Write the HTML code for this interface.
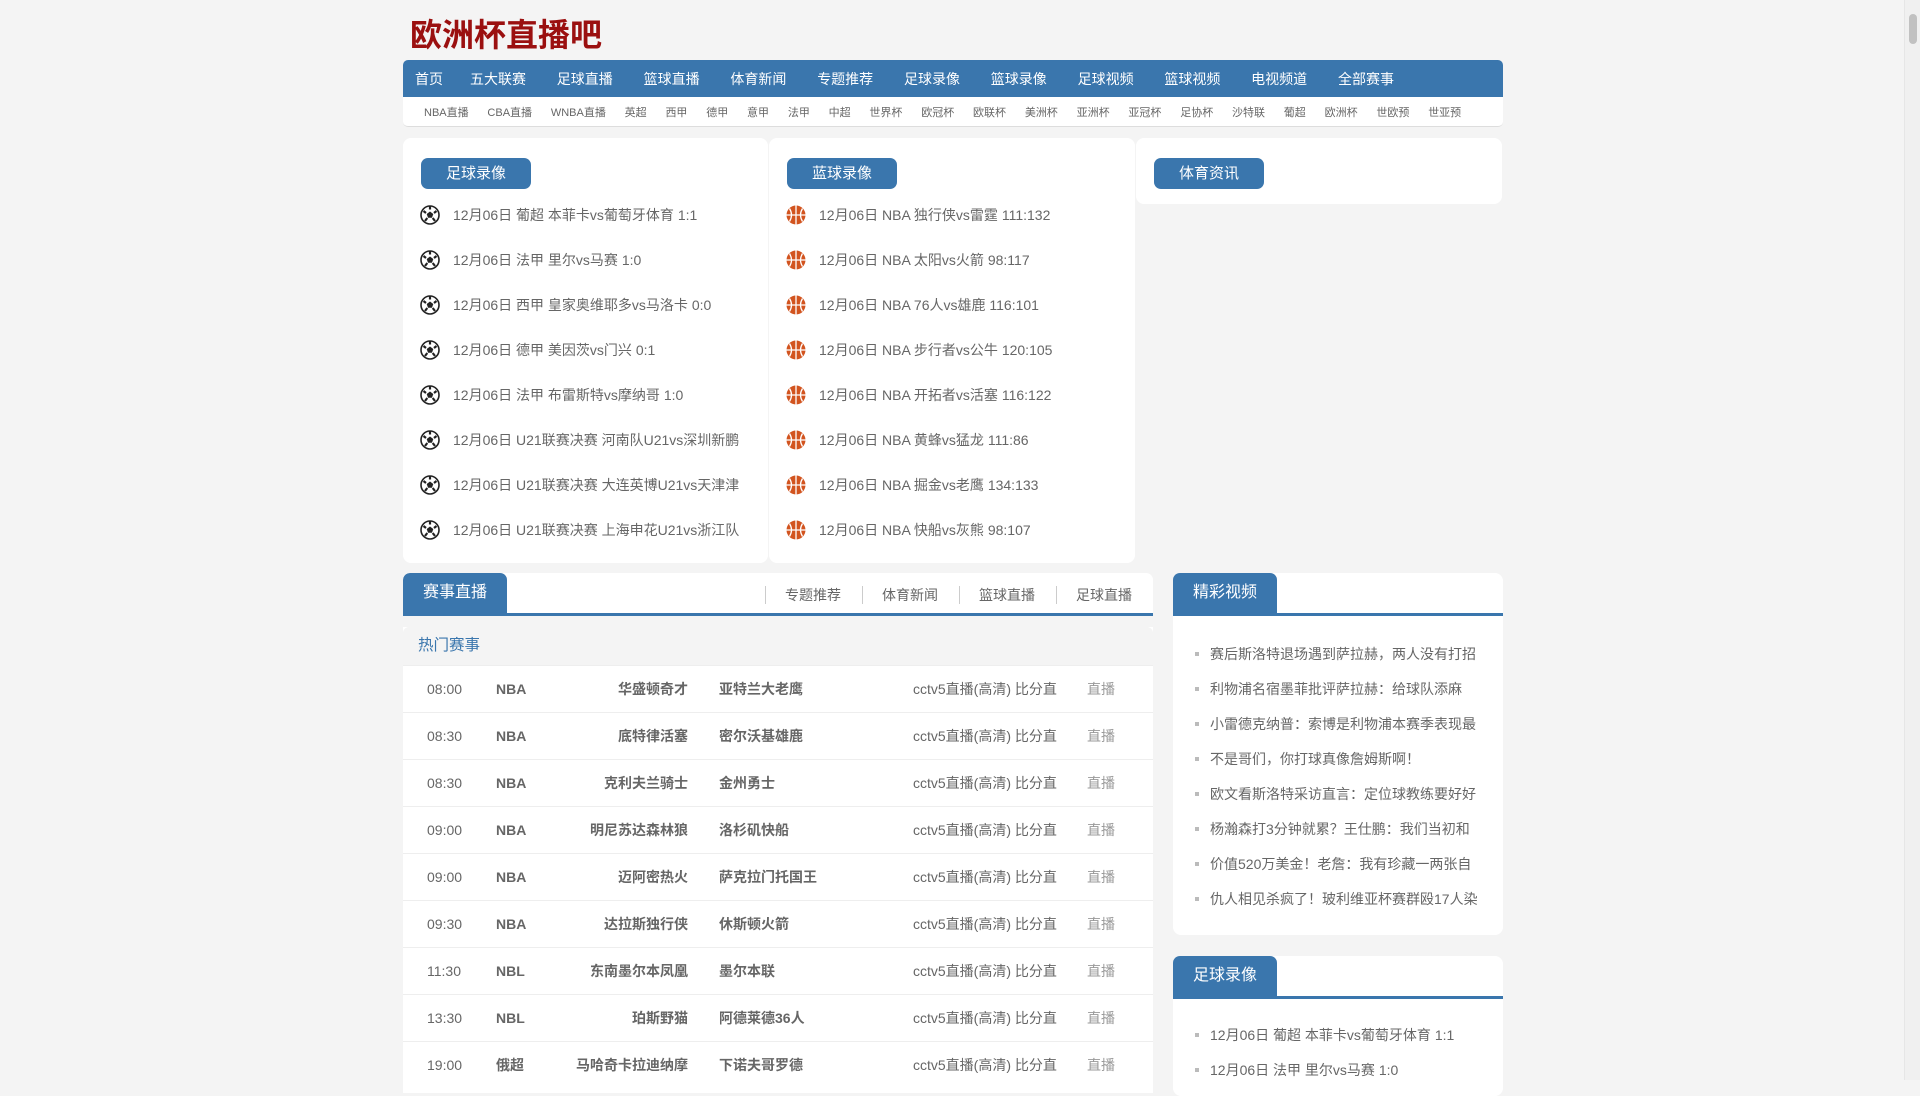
<!DOCTYPE html>
<html><head><meta charset="utf-8"><style>
*{margin:0;padding:0;box-sizing:border-box}
body{width:1920px;height:1080px;overflow:hidden;background:#f4f4f4;font-family:"Liberation Sans","Noto Sans CJK SC",sans-serif;color:#666;position:relative}
.abs{position:absolute}
.logo{left:410px;top:10px;font-size:32px;font-weight:bold;color:#9b1010;letter-spacing:0px;font-family:"Noto Sans CJK SC",sans-serif;white-space:nowrap}
.nav{left:403px;top:60px;width:1100px;height:37px;background:#3a76ad;border-radius:5px 5px 0 0;display:flex;align-items:center;padding-left:12px;white-space:nowrap}
.nav span{color:#fff;font-size:14px;margin-right:30.8px}
.nav span:first-child{margin-right:27px}
.sub{left:403px;top:97px;width:1100px;height:30px;background:#fff;border-bottom:1px solid #ddd;border-radius:0 0 5px 5px;display:flex;align-items:center;padding-left:21px;white-space:nowrap}
.sub span{font-size:11px;color:#666;margin-right:18.8px}
.box{background:#fff;border-radius:8px}
.btn{background:#3a76ad;color:#fff;font-size:15px;width:110px;height:31px;border-radius:7px;text-align:center;line-height:31px}
.li{font-size:14px;color:#666;height:45px;line-height:45px;white-space:nowrap;overflow:hidden;position:relative;padding-left:33px}
.li svg{position:absolute;left:0;top:12px}
.tab{background:#3a76ad;color:#fff;font-size:16px;height:40px;line-height:40px;text-align:center;border-radius:7px 7px 0 0}
.row{position:absolute;left:0;width:750px;height:47px;border-top:1px solid #eee;font-size:14px;line-height:47px;background:#fff;white-space:nowrap}
.row span{position:absolute}
.vi{font-size:14px;color:#666;height:35px;line-height:35px;white-space:nowrap;overflow:hidden;padding-left:37px;position:relative}
.vi:before{content:"";position:absolute;left:22px;top:15px;width:4px;height:4px;background:#bbb}
</style></head><body>
<div class="abs logo">欧洲杯直播吧</div>
<div class="abs nav"><span>首页</span><span>五大联赛</span><span>足球直播</span><span>篮球直播</span><span>体育新闻</span><span>专题推荐</span><span>足球录像</span><span>篮球录像</span><span>足球视频</span><span>篮球视频</span><span>电视频道</span><span>全部赛事</span></div>
<div class="abs sub"><span>NBA直播</span><span>CBA直播</span><span>WNBA直播</span><span>英超</span><span>西甲</span><span>德甲</span><span>意甲</span><span>法甲</span><span>中超</span><span>世界杯</span><span>欧冠杯</span><span>欧联杯</span><span>美洲杯</span><span>亚洲杯</span><span>亚冠杯</span><span>足协杯</span><span>沙特联</span><span>葡超</span><span>欧洲杯</span><span>世欧预</span><span>世亚预</span></div>

<div class="abs box" style="left:403px;top:138px;width:365px;height:425px"></div>
<div class="abs box" style="left:769px;top:138px;width:366px;height:425px"></div>
<div class="abs box" style="left:1136px;top:138px;width:366px;height:66px"></div>
<div class="abs btn" style="left:421px;top:158px">足球录像</div>
<div class="abs btn" style="left:787px;top:158px">蓝球录像</div>
<div class="abs btn" style="left:1154px;top:158px">体育资讯</div>

<div class="abs" style="left:420px;top:193px;width:322px">
<div class="li"><svg width="20" height="20" viewBox="0 0 20 20"><circle cx="10" cy="10" r="9" fill="#fff" stroke="#222" stroke-width="1.6"/><polygon points="10,6.5 13.3,9 12,12.8 8,12.8 6.7,9" fill="#222"/><path d="M10 1.5v3M16.5 6l-2.5 2M15 16l-2.3-3M5 16l2.3-3M3.5 6l2.5 2" stroke="#222" stroke-width="2.2"/></svg>12月06日 葡超 本菲卡vs葡萄牙体育 1:1</div>
<div class="li"><svg width="20" height="20" viewBox="0 0 20 20"><circle cx="10" cy="10" r="9" fill="#fff" stroke="#222" stroke-width="1.6"/><polygon points="10,6.5 13.3,9 12,12.8 8,12.8 6.7,9" fill="#222"/><path d="M10 1.5v3M16.5 6l-2.5 2M15 16l-2.3-3M5 16l2.3-3M3.5 6l2.5 2" stroke="#222" stroke-width="2.2"/></svg>12月06日 法甲 里尔vs马赛 1:0</div>
<div class="li"><svg width="20" height="20" viewBox="0 0 20 20"><circle cx="10" cy="10" r="9" fill="#fff" stroke="#222" stroke-width="1.6"/><polygon points="10,6.5 13.3,9 12,12.8 8,12.8 6.7,9" fill="#222"/><path d="M10 1.5v3M16.5 6l-2.5 2M15 16l-2.3-3M5 16l2.3-3M3.5 6l2.5 2" stroke="#222" stroke-width="2.2"/></svg>12月06日 西甲 皇家奥维耶多vs马洛卡 0:0</div>
<div class="li"><svg width="20" height="20" viewBox="0 0 20 20"><circle cx="10" cy="10" r="9" fill="#fff" stroke="#222" stroke-width="1.6"/><polygon points="10,6.5 13.3,9 12,12.8 8,12.8 6.7,9" fill="#222"/><path d="M10 1.5v3M16.5 6l-2.5 2M15 16l-2.3-3M5 16l2.3-3M3.5 6l2.5 2" stroke="#222" stroke-width="2.2"/></svg>12月06日 德甲 美因茨vs门兴 0:1</div>
<div class="li"><svg width="20" height="20" viewBox="0 0 20 20"><circle cx="10" cy="10" r="9" fill="#fff" stroke="#222" stroke-width="1.6"/><polygon points="10,6.5 13.3,9 12,12.8 8,12.8 6.7,9" fill="#222"/><path d="M10 1.5v3M16.5 6l-2.5 2M15 16l-2.3-3M5 16l2.3-3M3.5 6l2.5 2" stroke="#222" stroke-width="2.2"/></svg>12月06日 法甲 布雷斯特vs摩纳哥 1:0</div>
<div class="li"><svg width="20" height="20" viewBox="0 0 20 20"><circle cx="10" cy="10" r="9" fill="#fff" stroke="#222" stroke-width="1.6"/><polygon points="10,6.5 13.3,9 12,12.8 8,12.8 6.7,9" fill="#222"/><path d="M10 1.5v3M16.5 6l-2.5 2M15 16l-2.3-3M5 16l2.3-3M3.5 6l2.5 2" stroke="#222" stroke-width="2.2"/></svg>12月06日 U21联赛决赛 河南队U21vs深圳新鹏</div>
<div class="li"><svg width="20" height="20" viewBox="0 0 20 20"><circle cx="10" cy="10" r="9" fill="#fff" stroke="#222" stroke-width="1.6"/><polygon points="10,6.5 13.3,9 12,12.8 8,12.8 6.7,9" fill="#222"/><path d="M10 1.5v3M16.5 6l-2.5 2M15 16l-2.3-3M5 16l2.3-3M3.5 6l2.5 2" stroke="#222" stroke-width="2.2"/></svg>12月06日 U21联赛决赛 大连英博U21vs天津津</div>
<div class="li"><svg width="20" height="20" viewBox="0 0 20 20"><circle cx="10" cy="10" r="9" fill="#fff" stroke="#222" stroke-width="1.6"/><polygon points="10,6.5 13.3,9 12,12.8 8,12.8 6.7,9" fill="#222"/><path d="M10 1.5v3M16.5 6l-2.5 2M15 16l-2.3-3M5 16l2.3-3M3.5 6l2.5 2" stroke="#222" stroke-width="2.2"/></svg>12月06日 U21联赛决赛 上海申花U21vs浙江队</div>
</div>

<div class="abs" style="left:786px;top:193px;width:340px">
<div class="li"><svg width="20" height="20" viewBox="0 0 20 20"><circle cx="10" cy="10" r="9.5" fill="#d2541f"/><path d="M0.5 10h19M10 .5v19M3.5 3.5q4 6.5 0 13M16.5 3.5q-4 6.5 0 13" stroke="#fff" stroke-width="1.3" fill="none"/></svg>12月06日 NBA 独行侠vs雷霆 111:132</div>
<div class="li"><svg width="20" height="20" viewBox="0 0 20 20"><circle cx="10" cy="10" r="9.5" fill="#d2541f"/><path d="M0.5 10h19M10 .5v19M3.5 3.5q4 6.5 0 13M16.5 3.5q-4 6.5 0 13" stroke="#fff" stroke-width="1.3" fill="none"/></svg>12月06日 NBA 太阳vs火箭 98:117</div>
<div class="li"><svg width="20" height="20" viewBox="0 0 20 20"><circle cx="10" cy="10" r="9.5" fill="#d2541f"/><path d="M0.5 10h19M10 .5v19M3.5 3.5q4 6.5 0 13M16.5 3.5q-4 6.5 0 13" stroke="#fff" stroke-width="1.3" fill="none"/></svg>12月06日 NBA 76人vs雄鹿 116:101</div>
<div class="li"><svg width="20" height="20" viewBox="0 0 20 20"><circle cx="10" cy="10" r="9.5" fill="#d2541f"/><path d="M0.5 10h19M10 .5v19M3.5 3.5q4 6.5 0 13M16.5 3.5q-4 6.5 0 13" stroke="#fff" stroke-width="1.3" fill="none"/></svg>12月06日 NBA 步行者vs公牛 120:105</div>
<div class="li"><svg width="20" height="20" viewBox="0 0 20 20"><circle cx="10" cy="10" r="9.5" fill="#d2541f"/><path d="M0.5 10h19M10 .5v19M3.5 3.5q4 6.5 0 13M16.5 3.5q-4 6.5 0 13" stroke="#fff" stroke-width="1.3" fill="none"/></svg>12月06日 NBA 开拓者vs活塞 116:122</div>
<div class="li"><svg width="20" height="20" viewBox="0 0 20 20"><circle cx="10" cy="10" r="9.5" fill="#d2541f"/><path d="M0.5 10h19M10 .5v19M3.5 3.5q4 6.5 0 13M16.5 3.5q-4 6.5 0 13" stroke="#fff" stroke-width="1.3" fill="none"/></svg>12月06日 NBA 黄蜂vs猛龙 111:86</div>
<div class="li"><svg width="20" height="20" viewBox="0 0 20 20"><circle cx="10" cy="10" r="9.5" fill="#d2541f"/><path d="M0.5 10h19M10 .5v19M3.5 3.5q4 6.5 0 13M16.5 3.5q-4 6.5 0 13" stroke="#fff" stroke-width="1.3" fill="none"/></svg>12月06日 NBA 掘金vs老鹰 134:133</div>
<div class="li"><svg width="20" height="20" viewBox="0 0 20 20"><circle cx="10" cy="10" r="9.5" fill="#d2541f"/><path d="M0.5 10h19M10 .5v19M3.5 3.5q4 6.5 0 13M16.5 3.5q-4 6.5 0 13" stroke="#fff" stroke-width="1.3" fill="none"/></svg>12月06日 NBA 快船vs灰熊 98:107</div>
</div>

<!-- live section -->
<div class="abs" style="left:403px;top:573px;width:750px;height:520px;background:#fff;border-radius:7px 7px 0 0;overflow:hidden">
 <div class="tab abs" style="left:0;top:0;width:104px">赛事直播</div>
 <div class="abs" style="left:0;top:40px;width:750px;height:3px;background:#3a76ad"></div>
 <div class="abs" style="left:362px;top:13px;font-size:14px;color:#666;display:flex;white-space:nowrap">
  <span style="border-left:1px solid #ccc;padding:0 0 0 19px;width:97px;line-height:18px">专题推荐</span>
  <span style="border-left:1px solid #ccc;padding:0 0 0 19px;width:97px;line-height:18px">体育新闻</span>
  <span style="border-left:1px solid #ccc;padding:0 0 0 19px;width:97px;line-height:18px">篮球直播</span>
  <span style="border-left:1px solid #ccc;padding:0 0 0 19px;width:97px;line-height:18px">足球直播</span>
 </div>
 <div class="abs" style="left:0;top:43px;width:750px;height:11px;background:#f4f4f4"></div>
 <div class="abs" style="left:0;top:54px;width:750px;height:38px;background:#f4f4f4;border-radius:6px 6px 0 0;color:#3a76ad;font-size:15.5px;line-height:38px;padding-left:15px">热门赛事</div>
</div>
<div class="abs" style="left:403px;top:665px;width:750px;height:420px">
<div class="row" style="top:0"><span style="left:24px">08:00</span><span style="left:93px;font-weight:bold">NBA</span><span style="right:465px;font-weight:bold">华盛顿奇才</span><span style="left:316px;font-weight:bold">亚特兰大老鹰</span><span style="left:510px">cctv5直播(高清) 比分直</span><span style="left:684px;color:#999">直播</span></div>
<div class="row" style="top:47px"><span style="left:24px">08:30</span><span style="left:93px;font-weight:bold">NBA</span><span style="right:465px;font-weight:bold">底特律活塞</span><span style="left:316px;font-weight:bold">密尔沃基雄鹿</span><span style="left:510px">cctv5直播(高清) 比分直</span><span style="left:684px;color:#999">直播</span></div>
<div class="row" style="top:94px"><span style="left:24px">08:30</span><span style="left:93px;font-weight:bold">NBA</span><span style="right:465px;font-weight:bold">克利夫兰骑士</span><span style="left:316px;font-weight:bold">金州勇士</span><span style="left:510px">cctv5直播(高清) 比分直</span><span style="left:684px;color:#999">直播</span></div>
<div class="row" style="top:141px"><span style="left:24px">09:00</span><span style="left:93px;font-weight:bold">NBA</span><span style="right:465px;font-weight:bold">明尼苏达森林狼</span><span style="left:316px;font-weight:bold">洛杉矶快船</span><span style="left:510px">cctv5直播(高清) 比分直</span><span style="left:684px;color:#999">直播</span></div>
<div class="row" style="top:188px"><span style="left:24px">09:00</span><span style="left:93px;font-weight:bold">NBA</span><span style="right:465px;font-weight:bold">迈阿密热火</span><span style="left:316px;font-weight:bold">萨克拉门托国王</span><span style="left:510px">cctv5直播(高清) 比分直</span><span style="left:684px;color:#999">直播</span></div>
<div class="row" style="top:235px"><span style="left:24px">09:30</span><span style="left:93px;font-weight:bold">NBA</span><span style="right:465px;font-weight:bold">达拉斯独行侠</span><span style="left:316px;font-weight:bold">休斯顿火箭</span><span style="left:510px">cctv5直播(高清) 比分直</span><span style="left:684px;color:#999">直播</span></div>
<div class="row" style="top:282px"><span style="left:24px">11:30</span><span style="left:93px;font-weight:bold">NBL</span><span style="right:465px;font-weight:bold">东南墨尔本凤凰</span><span style="left:316px;font-weight:bold">墨尔本联</span><span style="left:510px">cctv5直播(高清) 比分直</span><span style="left:684px;color:#999">直播</span></div>
<div class="row" style="top:329px"><span style="left:24px">13:30</span><span style="left:93px;font-weight:bold">NBL</span><span style="right:465px;font-weight:bold">珀斯野猫</span><span style="left:316px;font-weight:bold">阿德莱德36人</span><span style="left:510px">cctv5直播(高清) 比分直</span><span style="left:684px;color:#999">直播</span></div>
<div class="row" style="top:376px"><span style="left:24px">19:00</span><span style="left:93px;font-weight:bold">俄超</span><span style="right:465px;font-weight:bold">马哈奇卡拉迪纳摩</span><span style="left:316px;font-weight:bold">下诺夫哥罗德</span><span style="left:510px">cctv5直播(高清) 比分直</span><span style="left:684px;color:#999">直播</span></div>
</div>

<!-- right -->
<div class="abs box" style="left:1173px;top:573px;width:330px;height:362px">
 <div class="tab abs" style="left:0;top:0;width:104px">精彩视频</div>
 <div class="abs" style="left:0;top:40px;width:330px;height:3px;background:#3a76ad"></div>
 <div class="abs" style="left:0;top:64px;width:305px;overflow:hidden">
  <div class="vi">赛后斯洛特退场遇到萨拉赫，两人没有打招</div>
  <div class="vi">利物浦名宿墨菲批评萨拉赫：给球队添麻</div>
  <div class="vi">小雷德克纳普：索博是利物浦本赛季表现最</div>
  <div class="vi">不是哥们，你打球真像詹姆斯啊！</div>
  <div class="vi">欧文看斯洛特采访直言：定位球教练要好好</div>
  <div class="vi">杨瀚森打3分钟就累？王仕鹏：我们当初和</div>
  <div class="vi">价值520万美金！老詹：我有珍藏一两张自</div>
  <div class="vi">仇人相见杀疯了！玻利维亚杯赛群殴17人染</div>
 </div>
</div>
<div class="abs box" style="left:1173px;top:956px;width:330px;height:140px">
 <div class="tab abs" style="left:0;top:0;width:104px">足球录像</div>
 <div class="abs" style="left:0;top:40px;width:330px;height:3px;background:#3a76ad"></div>
 <div class="abs" style="left:0;top:62px;width:320px">
  <div class="vi">12月06日 葡超 本菲卡vs葡萄牙体育 1:1</div>
  <div class="vi">12月06日 法甲 里尔vs马赛 1:0</div>
 </div>
</div>
<div class="abs" style="left:1904px;top:0;width:16px;height:1080px;background:#f0f0f0;border-left:1px solid #e6e6e6">
 <div style="position:absolute;left:4px;top:14px;width:8px;height:30px;background:#c1c1c1;border-radius:4px"></div>
</div>
</body></html>
